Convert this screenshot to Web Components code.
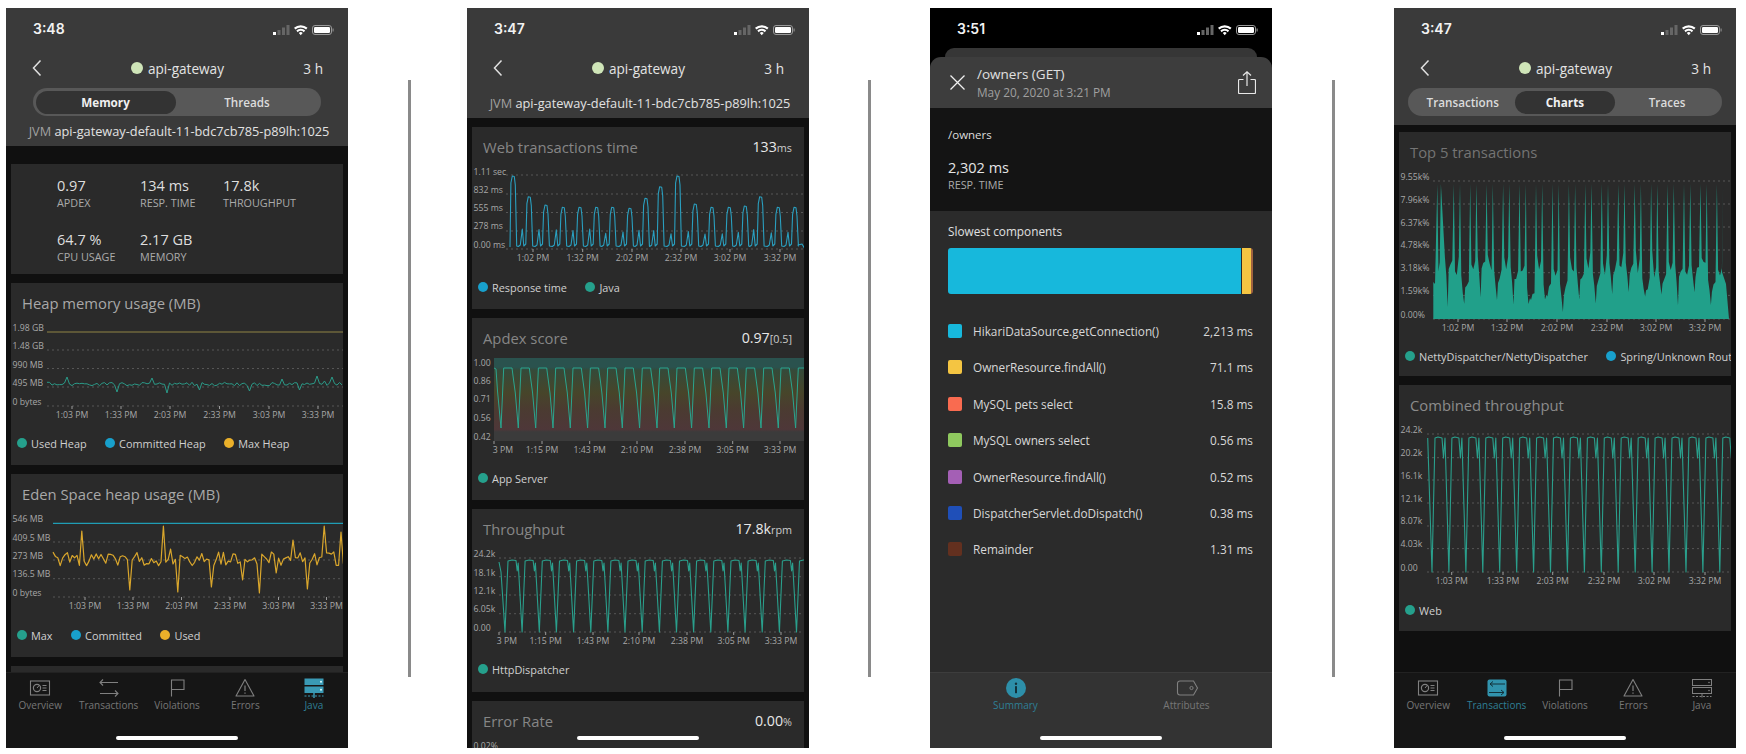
<!doctype html>
<html lang="en"><head><meta charset="utf-8"><title>APM mobile screens</title>
<style>html,body{margin:0;padding:0;background:#fff}</style></head>
<body>
<app-gallery>
  <phone-screen>
    <status-bar time="3:48"></status-bar>
    <app-header></app-header>
    <seg-control cols="140px 1fr" mx="27"><seg-item active>Memory</seg-item><seg-item>Threads</seg-item></seg-control>
    <jvm-line>api-gateway-default-11-bdc7cb785-p89lh:1025</jvm-line>
    <card-stack pad="18">
      <metric-card>
        <metric-item value="0.97">APDEX</metric-item><metric-item value="134 ms">RESP. TIME</metric-item><metric-item value="17.8k">THROUGHPUT</metric-item>
        <metric-item value="64.7 %">CPU USAGE</metric-item><metric-item value="2.17 GB">MEMORY</metric-item>
      </metric-card>
      <chart-card chart="heap" h="182" tone="#a8a8a8"><span slot="title">Heap memory usage (MB)</span>
        <legend-item color="#25a08c">Used Heap</legend-item><legend-item color="#18a0cc">Committed Heap</legend-item><legend-item color="#eab02a">Max Heap</legend-item></chart-card>
      <chart-card chart="eden" h="183" tone="#a8a8a8"><span slot="title">Eden Space heap usage (MB)</span>
        <legend-item color="#25a08c">Max</legend-item><legend-item color="#18a0cc">Committed</legend-item><legend-item color="#eab02a">Used</legend-item></chart-card>
      <chart-card h="60"></chart-card>
    </card-stack>
    <tab-bar>
      <tab-item icon="overview">Overview</tab-item><tab-item icon="transactions">Transactions</tab-item><tab-item icon="violations">Violations</tab-item><tab-item icon="errors">Errors</tab-item><tab-item icon="java" active>Java</tab-item>
    </tab-bar>
  </phone-screen>
  <gallery-rule left="60" right="56"></gallery-rule>
  <phone-screen>
    <status-bar time="3:47"></status-bar>
    <app-header></app-header>
    <jvm-line>api-gateway-default-11-bdc7cb785-p89lh:1025</jvm-line>
    <card-stack pad="9">
      <chart-card chart="web" h="182" tone="#868686"><span slot="title">Web transactions time</span><stat-value slot="value" unit="ms">133</stat-value>
        <legend-item color="#18a0cc">Response time</legend-item><legend-item color="#25a08c">Java</legend-item></chart-card>
      <chart-card chart="apdex" h="182" tone="#868686"><span slot="title">Apdex score</span><stat-value slot="value" unit="[0.5]">0.97</stat-value>
        <legend-item color="#25a08c">App Server</legend-item></chart-card>
      <chart-card chart="through" h="183" tone="#868686"><span slot="title">Throughput</span><stat-value slot="value" unit="rpm">17.8k</stat-value>
        <legend-item color="#25a08c">HttpDispatcher</legend-item></chart-card>
      <chart-card chart="error" h="60" tone="#868686"><span slot="title">Error Rate</span><stat-value slot="value" unit="%">0.00</stat-value></chart-card>
    </card-stack>
  </phone-screen>
  <gallery-rule left="59" right="59"></gallery-rule>
  <phone-screen bg="#000">
    <status-bar time="3:51"></status-bar>
    <trace-sheet>
      <span slot="title">/owners (GET)</span><span slot="date">May 20, 2020 at 3:21 PM</span>
      <summary-block value="2,302 ms" label="RESP. TIME">/owners</summary-block>
      <component-list>
        <component-row color="#17b8dc" value="2,213 ms">HikariDataSource.getConnection()</component-row>
        <component-row color="#f4c542" value="71.1 ms">OwnerResource.findAll()</component-row>
        <component-row color="#f96b50" value="15.8 ms">MySQL pets select</component-row>
        <component-row color="#8fc95f" value="0.56 ms">MySQL owners select</component-row>
        <component-row color="#a45fb5" value="0.52 ms">OwnerResource.findAll()</component-row>
        <component-row color="#1f4fb8" value="0.38 ms">DispatcherServlet.doDispatch()</component-row>
        <component-row color="#63301f" value="1.31 ms">Remainder</component-row>
      </component-list>
    </trace-sheet>
    <tab-bar bg="#333333" line="#3d3d3d">
      <tab-item icon="summary" active>Summary</tab-item><tab-item icon="attributes">Attributes</tab-item>
    </tab-bar>
  </phone-screen>
  <gallery-rule left="60" right="59"></gallery-rule>
  <phone-screen>
    <status-bar time="3:47"></status-bar>
    <app-header></app-header>
    <seg-control cols="104.5px 99.7px 1fr" mx="14" mb="8.5"><seg-item>Transactions</seg-item><seg-item active>Charts</seg-item><seg-item>Traces</seg-item></seg-control>
    <card-stack pad="7.5">
      <chart-card chart="top5" h="244" tone="#747474"><span slot="title">Top 5 transactions</span>
        <legend-item color="#25a08c">NettyDispatcher/NettyDispatcher</legend-item><legend-item color="#18a0cc">Spring/Unknown Route</legend-item></chart-card>
      <chart-card chart="combined" h="246" tone="#8c8c8c"><span slot="title">Combined throughput</span>
        <legend-item color="#25a08c">Web</legend-item></chart-card>
    </card-stack>
    <tab-bar>
      <tab-item icon="overview">Overview</tab-item><tab-item icon="transactions" active>Transactions</tab-item><tab-item icon="violations">Violations</tab-item><tab-item icon="errors">Errors</tab-item><tab-item icon="java">Java</tab-item>
    </tab-bar>
  </phone-screen>
</app-gallery>
<script>
const rng = seed => { let s = seed; return () => (s = (s * 16807) % 2147483647) / 2147483647; };
const toPath = pts => 'M' + pts.map(p => p[0].toFixed(1) + ' ' + p[1].toFixed(1)).join('L');

function noisy(x0, x1, step, base, amp, seed, spikes) {
  const r = rng(seed), pts = [];
  for (let x = x0; x <= x1; x += step) {
    let y = base + (r() - .5) * amp;
    for (const [sx, sy] of spikes) {
      if (Math.abs(x - sx) < step / 2) y = sy;
    }
    pts.push([x, y]);
  }
  return toPath(pts);
}
function webLine() {
  const peaks = [[220,528],[268,590],[318,615],[370,622],[420,622],[470,622],[518,622],[570,625],[618,595],[662,560],[714,528],[766,612],[816,622],[868,622],[916,618],[962,590],[1015,622],[1065,622]];
  const pts = [[510, 247]];
  const r = rng(77);
  peaks.forEach(([zx, zy], i) => {
    const p = 440 + zx / 3, py = zy / 3;
    if (i) pts.push([p-11,246.5],[p-9,245],[p-7,229+r()*5],[p-5.5,246],[p-3.5,244]);
    pts.push([p-2.4,py+7],[p-1,py],[p+1,py+.5],[p+2,py+9],[p+3.4,246]);
  });
  pts.push([798,245],[802,244],[805,249]);
  return toPath(pts);
}
function apdexLine() {
  const first = 440 + 183/3;
  const pts = [[494,368],[496,369],[497.5,391],[first,428]];
  for (let i = 0; i < 18; i++) {
    const d = first + i * 17.33;
    pts.push([d+2.7,368],[d+11,368],[d+12.7,381],[d+14.3,393],[d+17.33,428]);
  }
  return toPath(pts);
}
function throughLine() {
  const pts = [[499,562],[501,572],[440+195/3,632]];
  for (let i = 0; i < 18; i++) {
    const d = 440 + 195/3 + i * 17.15;
    pts.push([d+3,561],[d+7,560],[d+11,560.5],[d+12.2,571],[d+13.2,563],[d+17.15,632]);
  }
  return toPath(pts);
}
function combinedLine() {
  const pts = [[1427.7,438],[1326+318/3,572]];
  for (let i = 0; i < 18; i++) {
    const d = 1326 + 318/3 + i * 16.93;
    pts.push([d+3,438],[d+6,437],[d+10,438],[d+11.5,458],[d+13,438],[d+16.93,572]);
  }
  return toPath(pts);
}
function top5Area() {
  const r = rng(4242);
  const pts = [[1433.3,319],[1433.3,282],[1435,284]];
  const deep = {7: 312};
  for (let i = 0; i < 18; i++) {
    const p = 1437.3 + i * 16.45;
    const b = -12 + r() * 34;
    const sep = i === 0 ? 3.6 : 6.2;
    pts.push([p,184],[p+1.2,250+r()*22],[p+sep/2,262+r()*16],[p+sep-1.2,248+r()*24],[p+sep,184]);
    if (i === 17) break;
    pts.push([p+7.6,268+b],[p+9,278+b+r()*8],[p+10.4,deep[i]||(292+r()*18)],[p+11.4,280+b],[p+13,270+b+r()*10],[p+15,264+b+r()*10]);
  }
  pts.push([1722,272],[1726,284],[1729,319]);
  return toPath(pts) + 'Z';
}

const xl = (list, y) => list.map(([t, x]) => [t, x, y]);
const CHARTS = {
  heap: { left: 11, top: 283, h: 108,
    y: [['1.98 GB',328],['1.48 GB',346],['990 MB',364.5],['495 MB',383],['0 bytes',402]],
    grid: [350,368.5,387,406], gx: 47,
    x: xl([['1:03 PM',72],['1:33 PM',121],['2:03 PM',170],['2:33 PM',219.5],['3:03 PM',269],['3:33 PM',318]], 414.5), tickY: 406,
    lines: [
      { d: 'M47 332H343', c: '#8f8445', w: 1.2 },
      { d: noisy(47, 344, 2.5, 384, 3.5, 99, [[68,377],[118,392],[151,378],[167,393],[200,390],[250,391],[283,379],[300,390],[316,376],[325,381],[333,377]]), c: '#2a9a88', w: 1 }
    ] },
  eden: { left: 11, top: 474, h: 109,
    y: [['546 MB',519],['409.5 MB',537.7],['273 MB',556],['136.5 MB',574],['0 bytes',593]],
    grid: [542,560,578.7,597], gx: 53,
    x: xl([['1:03 PM',85],['1:33 PM',133],['2:03 PM',181.5],['2:33 PM',230],['3:03 PM',278.5],['3:33 PM',326.5]], 606), tickY: 597,
    lines: [
      { d: 'M53 523.3H343', c: '#1f9db5', w: 1.2 },
      { d: noisy(53, 344, 2.4, 559, 14, 1234, [[82,531],[130,590],[163,526],[171,549],[179,592],[211,587],[243,580],[260,593],[276,573],[292,540],[308,589],[325,526],[333,552],[341,532]]), c: '#d9a62c', w: 1.2 }
    ] },
  web: { left: 472, top: 127, h: 108,
    y: [['1.11 sec',171.5],['832 ms',190],['555 ms',208],['278 ms',226],['0.00 ms',245]],
    grid: [175,194,212.5,231,249], gx: 506,
    x: xl([['1:02 PM',533],['1:32 PM',582.7],['2:02 PM',632],['2:32 PM',681],['3:02 PM',730],['3:32 PM',780]], 258), tickY: 249,
    lines: [{ d: webLine(), c: '#2a9fbf', w: 1.1 }] },
  apdex: { left: 472, top: 318, h: 108,
    y: [['1.00',363],['0.86',381],['0.71',399],['0.56',417.6],['0.42',437]],
    grid: [], gx: 494,
    x: xl([['3 PM',503],['1:15 PM',542],['1:43 PM',589.7],['2:10 PM',637],['2:38 PM',685],['3:05 PM',732.7],['3:33 PM',780]], 449.5), tickY: 441, noFirstTick: true, firstTickX: 494,
    band: { x: 494, y: 358, w: 310, h: 83 },
    lines: [{ d: apdexLine(), c: '#2aa58e', w: 1 }] },
  through: { left: 472, top: 509, h: 108,
    y: [['24.2k',554],['18.1k',572.7],['12.1k',591],['6.05k',609],['0.00',628]],
    grid: [558,576.7,595,613.7,632], gx: 499,
    x: xl([['3 PM',507],['1:15 PM',545.7],['1:43 PM',593],['2:10 PM',639],['2:38 PM',687],['3:05 PM',733.7],['3:33 PM',781]], 641), tickY: 632, noFirstTick: true, firstTickX: 499,
    lines: [{ d: throughLine(), c: '#2a9f8c', w: 1.1 }] },
  error: { left: 472, top: 701, h: 20,
    y: [['0.02%',745.7]], grid: [], gx: 510, x: [], lines: [] },
  top5: { left: 1399, top: 132, h: 172,
    y: [['9.55k%',177],['7.96k%',200],['6.37k%',222.7],['4.78k%',245],['3.18k%',268],['1.59k%',291],['0.00%',314.7]],
    grid: [181,204,227,250,272.7,295.4,319], gx: 1433,
    x: xl([['1:02 PM',1458],['1:32 PM',1507],['2:02 PM',1557],['2:32 PM',1607],['3:02 PM',1656],['3:32 PM',1705]], 327.5), tickY: 319,
    area: top5Area() },
  combined: { left: 1399, top: 385, h: 173,
    y: [['24.2k',430],['20.2k',453],['16.1k',476],['12.1k',499],['8.07k',521],['4.03k',544],['0.00',568]],
    grid: [434,457.7,480,503,526,548.6,572], gx: 1427,
    x: xl([['1:03 PM',1451.7],['1:33 PM',1503],['2:03 PM',1552.7],['2:32 PM',1604],['3:02 PM',1654],['3:32 PM',1705]], 581), tickY: 572,
    lines: [{ d: combinedLine(), c: '#2a9f8c', w: 1.1 }] }
};

const ICONS = {
  overview: c => `<rect x="4.5" y="5" width="19" height="14" fill="none" stroke="${c}" stroke-width="1.1"/><circle cx="11" cy="12" r="3.6" fill="none" stroke="${c}" stroke-width="1.2"/><path d="M11 12l2.4-2.8M16.5 9.5h4M16.5 12h4M16.5 14.5h4" stroke="${c}" stroke-width="1" fill="none"/>`,
  transactions: c => `<path d="M5 6.5h18M8 3.5l-3 3 3 3M5 17.5h18M20 14.5l3 3-3 3" fill="none" stroke="${c}" stroke-width="1.1"/>`,
  transactionsOn: c => `<rect x="4.5" y="3.5" width="19" height="17" rx="2" fill="#3193ad"/><path d="M7 8h15M10 5.5l-3 2.500 3 2.500M6 16.500h15M18 14l3 2.500-3 2.500" fill="none" stroke="#12313a" stroke-width="1"/>`,
  violations: c => `<path d="M8.5 20.5V4h12.5v9.5H8.5" fill="none" stroke="${c}" stroke-width="1.1"/>`,
  errors: c => `<path d="M14 3.5L23 20H5z" fill="none" stroke="${c}" stroke-width="1.1" stroke-linejoin="round"/><path d="M14 9.500v5.500M14 16.500v1.200" stroke="${c}" stroke-width="1.2"/>`,
  java: c => `<rect x="4.5" y="3.5" width="19" height="6" fill="none" stroke="${c}"/><rect x="4.5" y="11.5" width="19" height="6" fill="none" stroke="${c}"/><circle cx="21" cy="6.5" r=".8" fill="${c}"/><circle cx="21" cy="14.5" r=".8" fill="${c}"/><path d="M4.5 20.5h19" stroke="${c}" stroke-dasharray="2 1.5"/><path d="M14 17.5v4" stroke="${c}"/>`,
  javaOn: c => `<rect x="4.5" y="2.5" width="19" height="6.5" fill="#3a9ab5"/><rect x="4.5" y="10.5" width="19" height="6.5" fill="#3a9ab5"/><circle cx="21" cy="5.700" r="1" fill="#dff"/><circle cx="21" cy="13.700" r="1" fill="#dff"/><path d="M4.5 20h19" stroke="#3a9ab5" stroke-dasharray="2 1.5"/><path d="M14 17v5" stroke="#3a9ab5" stroke-width="1.5"/>`,
  summaryOn: c => `<circle cx="14" cy="12" r="10" fill="#2d8fa9"/><circle cx="14" cy="7.8" r="1.2" fill="#12313a"/><rect x="13" y="10.2" width="2" height="7" fill="#12313a"/>`,
  attributes: c => `<path d="M7 5h13.5l4 7-4 7H7a2.5 2.5 0 0 1-2.5-2.5v-9A2.5 2.5 0 0 1 7 5z" fill="none" stroke="${c}" stroke-width="1.1"/><circle cx="18.5" cy="12" r="1.6" fill="none" stroke="${c}"/>`
};

class Base extends HTMLElement {
  constructor() { super(); this.attachShadow({ mode: 'open' }); }
  connectedCallback() { this.shadowRoot.innerHTML = this.markup(); }
  attr(n, d) { return this.hasAttribute(n) ? this.getAttribute(n) : d; }
}
const def = (name, fn) => customElements.define(name, class extends Base { markup() { return fn.call(this); } });

def('app-gallery', () => `<style>:host{display:flex;align-items:flex-start;width:1746px;height:754px;box-sizing:border-box;padding:8px 0 0 6px;overflow:hidden;background:#fff;font-family:"Open Sans","Liberation Sans",sans-serif;color:#ddd}</style><slot></slot>`);
def('gallery-rule', function () { return `<style>:host{display:block;flex:none;width:3px;height:597px;margin:72px ${this.attr('right')}px 0 ${this.attr('left')}px;background:#8a8a8a}</style>`; });
def('phone-screen', function () { return `<style>:host{display:flex;flex-direction:column;flex:none;position:relative;width:342px;height:740px;overflow:hidden;background:${this.attr('bg','#3a3a3a')}}
  .home{position:absolute;left:110px;bottom:8px;width:122px;height:4px;border-radius:2px;background:#fff}</style><slot></slot><div class="home"></div>`; });
def('status-bar', function () {
  return `<style>:host{display:flex;flex:none;height:40px;align-items:center;justify-content:space-between;padding:0 13px 0 27px;box-sizing:border-box}
  b{font:600 14px Inter,"Liberation Sans",sans-serif;color:#f2f2f2}svg{display:block;margin-top:4px}</style><b>${this.attr('time')}</b>
  <svg width="62" height="12" viewBox="0 0 62 12"><rect x="0" y="8" width="3" height="3" fill="#fff"/><rect x="4.5" y="6" width="3" height="5" fill="#666"/><rect x="9" y="3.5" width="3" height="7.5" fill="#666"/><rect x="13.5" y="1" width="3" height="10" fill="#666"/>
  <path d="M21 3.800a10 10 0 0 1 13.500 0l-1.400 1.700a7.800 7.800 0 0 0-10.700 0zM23.300 6.600a6.200 6.200 0 0 1 8.900 0l-1.400 1.600a4 4 0 0 0-6.100 0zM25.800 9a2.800 2.800 0 0 1 3.900 0l-1.950 2.200z" fill="#fff"/>
  <rect x="39.5" y="1.5" width="19" height="9" rx="2.5" fill="none" stroke="#999"/><rect x="41" y="3" width="16" height="6" rx="1.2" fill="#fff"/><rect x="59.5" y="4.5" width="1.2" height="3" fill="#888"/></svg>`;
});
def('app-header', () => `<style>:host{display:grid;grid-template-columns:1fr auto 1fr;flex:none;height:40px;align-items:center;padding:0 25px 0 26px;color:#e4e4e4;font-size:13.6px}
  .mid{display:flex;align-items:center;gap:5px}i{width:12px;height:12px;border-radius:50%;background:#cfe5b8;display:block}.r{justify-self:end}</style>
  <svg width="10" height="18" viewBox="0 0 10 18"><path d="M8.5 1.500L1.500 9l7 7.500" fill="none" stroke="#e0e0e0" stroke-width="1.5"/></svg>
  <div class="mid"><i></i><span>api-gateway</span></div><span class="r">3 h</span>`);
def('seg-control', function () { return `<style>:host{display:grid;flex:none;grid-template-columns:${this.attr('cols')};height:28px;margin:0 ${this.attr('mx')}px ${this.attr('mb','0')}px;padding:2.5px;box-sizing:border-box;border-radius:14px;background:#585858}</style><slot></slot>`; });
def('seg-item', function () { const on = this.hasAttribute('active'); return `<style>:host{display:flex;align-items:center;justify-content:center;border-radius:12px;font-size:11.7px;font-weight:${on?700:600};color:${on?'#f0f0f0':'#dcdcdc'};background:${on?'#333333':'transparent'}}</style><slot></slot>`; });
def('jvm-line', () => `<style>:host{display:block;flex:none;height:30px;line-height:30px;padding-left:4px;text-align:center;font-size:12.75px;color:#e2e2e2;white-space:nowrap}span{color:#a0a0a0}</style><span>JVM</span> <slot></slot>`);
def('card-stack', function () { return `<style>:host{display:flex;flex-direction:column;flex:1 1 0;min-height:0;overflow:hidden;gap:9px;box-sizing:border-box;padding:${this.attr('pad')}px 5px 0;background:#101010}::slotted(*){flex:none}</style><slot></slot>`; });
def('metric-card', () => `<style>:host{display:grid;grid-template-columns:83px 83px 83px;grid-auto-rows:34px;row-gap:20px;height:110px;box-sizing:border-box;padding:12px 0 0 46px;background:#2a2a2a}</style><slot></slot>`);
def('metric-item', function () { return `<style>:host{display:block}div{font-size:14.5px;line-height:20px;color:#dedede}span{display:block;font-size:10.8px;line-height:14px;color:#aaa;white-space:nowrap}</style><div>${this.attr('value')}</div><span><slot></slot></span>`; });
def('stat-value', function () { return `<style>:host{display:inline-block;color:#e8e8e8;font-size:14.2px;white-space:nowrap}small{font-size:10.8px;color:#ccc}</style><slot></slot><small>${this.attr('unit')}</small>`; });
def('legend-item', function () { return `<style>:host{display:inline-flex;align-items:center;gap:4.5px;margin-right:18px;font-size:10.9px;color:#d0d0d0;white-space:nowrap;flex:none}i{width:10px;height:10px;border-radius:50%;background:${this.attr('color')}}</style><i></i><slot></slot>`; });
customElements.define('chart-card', class extends Base {
  markup() {
    const cfg = CHARTS[this.attr('chart')];
    let svg = '';
    if (cfg) {
      const y0 = cfg.top + 40, id = this.attr('chart');
      const ys = cfg.y.map(([t, y]) => `<text x="${cfg.left + 1.5}" y="${y + 3}" class="t">${t}</text>`).join('');
      const grid = cfg.grid.map(y => `<path d="M${cfg.gx} ${y}H${cfg.left + 332}" class="g"/>`).join('');
      const xs = cfg.x.map(([t, x, y], i) => `<text x="${x}" y="${y + 3}" class="t m">${t}</text>` + (i === 0 && cfg.noFirstTick ? `<path d="M${cfg.firstTickX} ${cfg.tickY}v3" class="k"/>` : `<path d="M${x} ${cfg.tickY}v3" class="k"/>`)).join('');
      const band = cfg.band ? `<defs><linearGradient id="b${id}" x1="0" y1="0" x2="0" y2="1"><stop offset="0" stop-color="#2a524e"/><stop offset=".11" stop-color="#2a524e"/><stop offset=".15" stop-color="#354a39"/><stop offset=".42" stop-color="#47452a"/><stop offset=".62" stop-color="#4b3b31"/><stop offset=".86" stop-color="#4e3739"/><stop offset=".89" stop-color="#3b3b3b"/><stop offset="1" stop-color="#3b3b3b"/></linearGradient></defs><rect x="${cfg.band.x}" y="${cfg.band.y}" width="${cfg.band.w}" height="${cfg.band.h}" fill="url(#b${id})"/>` : '';
      const area = cfg.area ? `<path d="${cfg.area}" fill="#21a08a"/>` : '';
      const lines = (cfg.lines || []).map(l => `<path d="${l.d}" fill="none" stroke="${l.c}" stroke-width="${l.w}" stroke-linejoin="round"/>`).join('');
      svg = `<svg width="332" height="${cfg.h}" viewBox="${cfg.left} ${y0} 332 ${cfg.h}"><clipPath id="c${id}"><rect x="${cfg.left}" y="${y0 - 10}" width="332" height="${cfg.h + 10}"/></clipPath>${grid}${band}<g clip-path="url(#c${id})">${area}${lines}</g>${ys}${xs}</svg>`;
    }
    const legendH = cfg && cfg.x.length ? 24 : 0;
    return `<style>:host{display:block;height:${this.attr('h')}px;background:#2a2a2a}
    .head{display:flex;box-sizing:border-box;height:40px;align-items:center;justify-content:space-between;padding:0 12px 1px 11px;font-size:14.8px;color:${this.attr('tone','#999')}}
    svg{display:block;flex:none;overflow:visible}
    .t{font-size:8.7px;fill:#a8a8a8}.m{text-anchor:middle}.g{stroke:#565656;stroke-width:1;stroke-dasharray:2 3;fill:none}.k{stroke:#9a9a9a;stroke-width:1}
    .leg{display:flex;height:${legendH}px;align-items:center;padding-left:5.5px;overflow:hidden;width:326.5px}</style>
    <div class="head"><span><slot name="title"></slot></span><slot name="value"></slot></div>${svg}<div class="leg"><slot></slot></div>`;
  }
});
def('tab-bar', function () { return `<style>:host{display:flex;flex:none;height:76px;box-sizing:border-box;background:${this.attr('bg','#161616')};border-top:1px solid ${this.attr('line','#222')};padding-top:3px}::slotted(*){flex:1 1 0}</style><slot></slot>`; });
def('tab-item', function () {
  const on = this.hasAttribute('active'), name = this.attr('icon');
  const c = on ? '#3a9ab5' : '#808080';
  const fn = ICONS[on ? name + 'On' : name] || ICONS[name];
  return `<style>:host{display:flex;flex-direction:column;align-items:center;min-width:0}svg{display:block}span{font-size:10px;line-height:14px;margin-top:-2px;color:${on ? '#2f7f95' : '#777'};white-space:nowrap}</style>
  <svg width="28" height="24" viewBox="0 0 28 24">${fn(c)}</svg><span><slot></slot></span>`;
});
def('trace-sheet', () => `<style>:host{display:flex;flex-direction:column;flex:1 1 0;min-height:0}
  .back{flex:none;height:9px;margin:0 15px;background:#363636;border-radius:9px 9px 0 0}
  .head{flex:none;display:flex;align-items:flex-start;height:51px;box-sizing:border-box;padding:7.5px 16px 0 20px;background:#3d3d3d;border-radius:11px 11px 0 0}
  .x{margin-top:10px;margin-right:12px;flex:none}.titles{flex:1}.a{font-size:13.5px;line-height:18px;color:#e0e0e0}.b{font-size:11.8px;line-height:18px;color:#a0a0a0}.s{flex:none;margin-top:6px}</style>
  <div class="back"></div>
  <div class="head"><svg class="x" width="15" height="15" viewBox="0 0 15 15"><path d="M.5.5l14 14M14.5.5l-14 14" stroke="#f0f0f0" stroke-width="1.3"/></svg>
    <div class="titles"><div class="a"><slot name="title"></slot></div><div class="b"><slot name="date"></slot></div></div>
    <svg class="s" width="18" height="23" viewBox="0 0 18 23"><path d="M5.5 8.5H1.5a1 1 0 0 0-1 1V21.500a1 1 0 0 0 1 1h15a1 1 0 0 0 1-1V9.500a1 1 0 0 0-1-1h-4M9 15V1M5 4.500L9 .8l4 3.700" fill="none" stroke="#e8e8e8" stroke-width="1.2"/></svg></div>
  <slot></slot>`);
def('summary-block', function () { return `<style>:host{display:block;flex:none;height:103px;box-sizing:border-box;padding:18px 18px 0;background:#141414}
  .p{font-size:11.5px;line-height:18px;color:#ddd}.v{margin-top:14px;font-size:14.5px;line-height:20px;color:#e4e4e4}.l{font-size:10.8px;line-height:14px;color:#aaa}</style>
  <div class="p"><slot></slot></div><div class="v">${this.attr('value')}</div><div class="l">${this.attr('label')}</div>`; });
def('component-list', () => `<style>:host{display:block;flex:1 1 0;box-sizing:border-box;padding:10px 19px 0 18px;background:#2b2b2b}
  h2{margin:0;font-size:11.8px;font-weight:500;line-height:20px;color:#e0e0e0}
  .bar{display:flex;height:46px;margin:7px 0 18.8px;border-radius:3px;overflow:hidden}
  .bar i{display:block}</style><h2>Slowest components</h2>
  <div class="bar"><i style="flex:1 0 0;background:#17b8dc"></i><i style="width:1px;background:#2b2b2b"></i><i style="width:8.5px;background:#f4c542"></i><i style="width:2.5px;background:#a0623f"></i></div><slot></slot>`);
def('component-row', function () { return `<style>:host{display:flex;align-items:center;height:36.4px;font-size:11.8px;color:#d8d8d8;white-space:nowrap}i{flex:none;width:14px;height:14px;border-radius:2px;margin-right:11px;background:${this.attr('color')}}span{flex:1}</style><i></i><span><slot></slot></span><b style="font-weight:400">${this.attr('value')}</b>`; });
</script>
</body></html>
